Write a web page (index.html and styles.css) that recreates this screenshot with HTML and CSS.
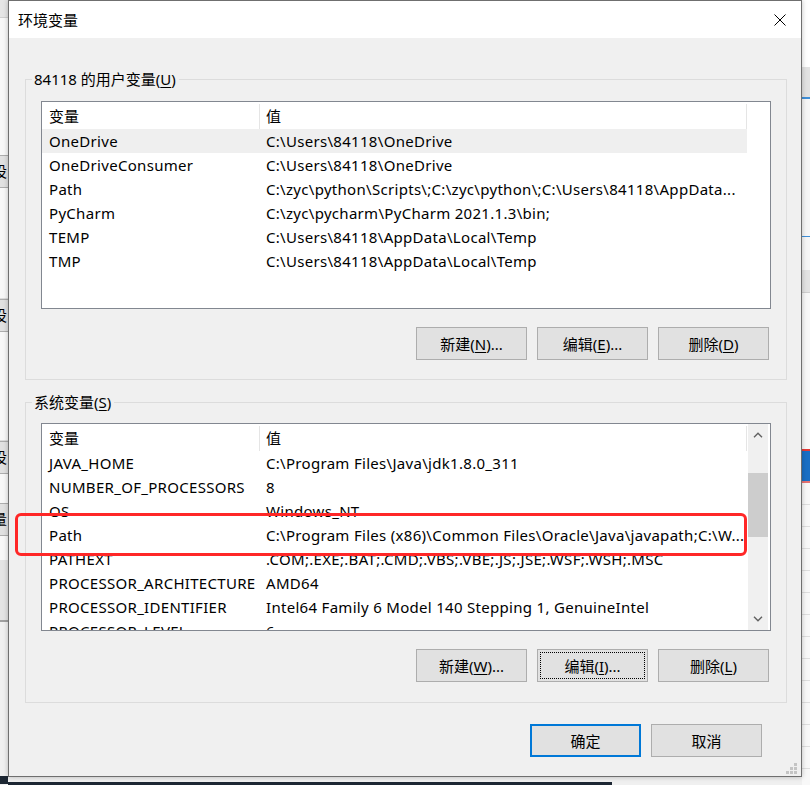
FILE: index.html
```html
<!DOCTYPE html>
<html lang="zh-CN">
<head>
<meta charset="utf-8">
<title>环境变量</title>
<link rel="stylesheet" href="styles.css">
</head>
<body>
<div class="desk-left">
  <div class="dl dl-top"></div>
  <div class="dl dl-white1"></div>
  <div class="dl dl-btn">设</div>
  <div class="dl dl-white2"></div>
  <div class="dl dl-btn">设</div>
  <div class="dl dl-white3"></div>
  <div class="dl dl-btn">设</div>
  <div class="dl dl-white4"></div>
  <div class="dl dl-btn">量</div>
  <div class="dl dl-white5"></div>
  <div class="dl dl-gray"></div>
  <div class="dl dl-rest"></div>
  <div class="dl dl-task"></div>
</div>

<div class="center">
<div class="dialog">
  <div class="titlebar">
    <span class="title">环境变量</span>
    <span class="close">
      <svg width="12" height="12" viewBox="0 0 12 12"><path d="M0.5 0.5 L11.5 11.5 M11.5 0.5 L0.5 11.5" stroke="#000" stroke-width="1" fill="none"/></svg>
    </span>
  </div>
  <div class="content">
    <div class="group group-user">
      <div class="group-title">84118 的用户变量(<u>U</u>)</div>
      <div class="list">
        <div class="table">
          <div class="head"><div class="hc hc1">变量</div><div class="hc hc2">值</div></div>
          <div class="row row-sel"><div class="c1">OneDrive</div><div class="c2">C:\Users\84118\OneDrive</div></div>
          <div class="row"><div class="c1">OneDriveConsumer</div><div class="c2">C:\Users\84118\OneDrive</div></div>
          <div class="row"><div class="c1">Path</div><div class="c2">C:\zyc\python\Scripts\;C:\zyc\python\;C:\Users\84118\AppData...</div></div>
          <div class="row"><div class="c1">PyCharm</div><div class="c2">C:\zyc\pycharm\PyCharm 2021.1.3\bin;</div></div>
          <div class="row"><div class="c1">TEMP</div><div class="c2">C:\Users\84118\AppData\Local\Temp</div></div>
          <div class="row"><div class="c1">TMP</div><div class="c2">C:\Users\84118\AppData\Local\Temp</div></div>
        </div>
      </div>
      <div class="buttons">
        <button class="btn">新建(<u>N</u>)...</button>
        <button class="btn">编辑(<u>E</u>)...</button>
        <button class="btn">删除(<u>D</u>)</button>
      </div>
    </div>

    <div class="group group-sys">
      <div class="group-title">系统变量(<u>S</u>)</div>
      <div class="list">
        <div class="table">
          <div class="head"><div class="hc hc1">变量</div><div class="hc hc2">值</div></div>
          <div class="row"><div class="c1">JAVA_HOME</div><div class="c2">C:\Program Files\Java\jdk1.8.0_311</div></div>
          <div class="row"><div class="c1">NUMBER_OF_PROCESSORS</div><div class="c2">8</div></div>
          <div class="row"><div class="c1">OS</div><div class="c2">Windows_NT</div></div>
          <div class="row"><div class="c1">Path</div><div class="c2">C:\Program Files (x86)\Common Files\Oracle\Java\javapath;C:\W...</div></div>
          <div class="row"><div class="c1">PATHEXT</div><div class="c2">.COM;.EXE;.BAT;.CMD;.VBS;.VBE;.JS;.JSE;.WSF;.WSH;.MSC</div></div>
          <div class="row"><div class="c1">PROCESSOR_ARCHITECTURE</div><div class="c2">AMD64</div></div>
          <div class="row"><div class="c1">PROCESSOR_IDENTIFIER</div><div class="c2">Intel64 Family 6 Model 140 Stepping 1, GenuineIntel</div></div>
          <div class="row"><div class="c1">PROCESSOR_LEVEL</div><div class="c2">6</div></div>
        </div>
        <div class="vscroll">
          <div class="sb-btn">
            <svg width="10" height="6" viewBox="0 0 10 6"><path d="M1 5.2 L5 1.2 L9 5.2" stroke="#606060" stroke-width="1.4" fill="none"/></svg>
          </div>
          <div class="sb-track"><div class="sb-thumb"></div></div>
          <div class="sb-btn">
            <svg width="10" height="6" viewBox="0 0 10 6"><path d="M1 0.8 L5 4.8 L9 0.8" stroke="#606060" stroke-width="1.4" fill="none"/></svg>
          </div>
        </div>
      </div>
      <div class="buttons">
        <button class="btn">新建(<u>W</u>)...</button>
        <button class="btn btn-focus"><span class="focus-ring">编辑(<u>I</u>)...</span></button>
        <button class="btn">删除(<u>L</u>)</button>
      </div>
    </div>

    <div class="footer">
      <button class="btn btn-default">确定</button>
      <button class="btn">取消</button>
    </div>
  </div>
  <svg class="grip" width="12" height="12" viewBox="0 0 12 12">
    <rect x="8" y="0" width="3" height="3" fill="#c4c4c4"/>
    <rect x="4" y="4" width="3" height="3" fill="#c4c4c4"/>
    <rect x="8" y="4" width="3" height="3" fill="#c4c4c4"/>
    <rect x="0" y="8" width="3" height="3" fill="#c4c4c4"/>
    <rect x="4" y="8" width="3" height="3" fill="#c4c4c4"/>
    <rect x="8" y="8" width="3" height="3" fill="#c4c4c4"/>
  </svg>
</div>
<div class="below"><div class="taskbar"></div></div>
</div>

<div class="desk-right">
  <div class="dr dr-white"></div>
  <div class="dr dr-gray"></div>
  <div class="dr dr-blue"></div>
  <div class="dr dr-light"></div>
  <div class="dr dr-blue1"></div>
  <div class="dr dr-light2"></div>
  <div class="dr dr-gray2"></div>
  <div class="dr dr-light3"></div>
  <div class="dr dr-sel"></div>
  <div class="dr dr-lines"></div>
</div>

<div class="annot"></div>
</body>
</html>
```

FILE: styles.css
```css
html, body {
  margin: 0;
  padding: 0;
}
body {
  width: 810px;
  height: 785px;
  overflow: hidden;
  position: relative;
  display: flex;
  align-items: flex-start;
  background: #f0f0f0;
  font-family: "Noto Sans", "Noto Sans CJK SC", sans-serif;
  font-size: 15px;
  color: #000;
}

/* desktop strips */
.desk-left {
  width: 8px;
  height: 785px;
  flex: none;
  display: flex;
  flex-direction: column;
  overflow: hidden;
}
.dl { flex: none; width: 8px; overflow: hidden; }
.dl-top { height: 17px; background: #e6e6e6; border-bottom: 1px solid #d0d0d0; }
.dl-white1 { height: 137px; background: #f8f8f8; }
.dl-btn {
  height: 31px;
  background: #e1e1e1;
  border-top: 1px solid #adadad;
  border-bottom: 1px solid #adadad;
  font-size: 15px;
  line-height: 31px;
  text-indent: -8px;
  white-space: nowrap;
}
.dl-white2 { height: 110px; background: #f8f8f8; border-bottom: 1px solid #dcdcdc; }
.dl-white3 { height: 108px; background: #f8f8f8; border-bottom: 1px solid #dcdcdc; }
.dl-white4 { height: 29px; background: #f8f8f8; }
.dl-white5 { height: 24px; background: #f8f8f8; }
.dl-gray { height: 60px; background: #e4e4e4; border-bottom: 2px solid #a0a0a0; }
.dl-rest { height: 154px; background: #f0f0f0; }
.dl-task { height: 8px; background: #1d2733; }

.center {
  width: 794px;
  flex: none;
  display: flex;
  flex-direction: column;
}
.below {
  height: 8px;
  display: flex;
  flex-direction: column;
  justify-content: flex-end;
}
.taskbar {
  width: 604px;
  height: 3px;
  background: #1d2733;
}

.desk-right {
  width: 8px;
  height: 785px;
  flex: none;
  display: flex;
  flex-direction: column;
  overflow: hidden;
  background: #f5f5f5;
}
.dr { flex: none; }
.dr-white { height: 67px; background: #ffffff; }
.dr-gray { height: 30px; background: #e2e2e2; }
.dr-blue { height: 2px; background: #3f8fd8; }
.dr-light { height: 137px; background: #f6f6f6; }
.dr-blue1 { height: 1px; background: #3f8fd8; }
.dr-light2 { height: 33px; background: #f6f6f6; }
.dr-gray2 { height: 22px; background: #e3e3e3; border-bottom: 1px solid #cfcfcf; }
.dr-light3 { height: 156px; background: #f8f8f8; border-bottom: 2px solid #e53935; }
.dr-sel { height: 30px; background: #1a6fc4; border-bottom: 2px solid #e57373; }
.dr-lines {
  height: 305px;
  background: repeating-linear-gradient(to bottom, #f8f8f8 0, #f8f8f8 21px, #dedede 21px, #dedede 22px);
}

/* dialog */
.dialog {
  width: 794px;
  height: 777px;
  flex: none;
  box-sizing: border-box;
  border: 1px solid #6f6f6f;
  background: #f0f0f0;
  display: flex;
  flex-direction: column;
  position: relative;
  box-shadow: 0 0 5px rgba(0, 0, 0, 0.25);
  z-index: 1;
}
.titlebar {
  height: 37px;
  flex: none;
  background: #fff;
  display: flex;
  align-items: center;
  justify-content: space-between;
  padding-left: 9px;
}
.title {
  font-size: 15px;
  line-height: 20px;
}
.close {
  width: 42px;
  height: 37px;
  display: flex;
  align-items: center;
  justify-content: center;
}
.close svg { display: block; }

.content {
  flex: 1;
  padding: 41px 14px 0 16px;
  display: flex;
  flex-direction: column;
}

.group {
  position: relative;
  border: 1px solid #dcdcdc;
  padding: 21px 15px 19px;
}
.group-sys {
  margin-top: 22px;
  padding: 20px 15px 20px;
}
.group-title {
  position: absolute;
  top: -11px;
  left: 6px;
  padding: 0 3px 0 2px;
  background: #f0f0f0;
  line-height: 20px;
  white-space: nowrap;
}
.group-title u, .btn u { text-underline-offset: 2px; }

.list {
  height: 208px;
  box-sizing: border-box;
  border: 1px solid #828790;
  background: #fff;
  display: flex;
  overflow: hidden;
}
.table {
  width: 705px;
  flex: none;
  overflow: hidden;
}
.head {
  height: 27px;
  display: flex;
  align-items: center;
}
.hc {
  height: 25px;
  margin-top: 1px;
  line-height: 25px;
  box-sizing: border-box;
  border-right: 1px solid #e5e5e5;
  white-space: nowrap;
}
.hc1 { width: 218px; padding-left: 7px; }
.hc2 { width: 487px; padding-left: 6px; }

.row {
  height: 24px;
  line-height: 24px;
  display: flex;
  white-space: nowrap;
  letter-spacing: 0.3px;
}
.row-sel { background: #efefef; }
.c1 {
  width: 218px;
  flex: none;
  box-sizing: border-box;
  padding-left: 7px;
  overflow: hidden;
}
.c2 {
  width: 487px;
  flex: none;
  box-sizing: border-box;
  padding-left: 6px;
  overflow: hidden;
}

.vscroll {
  width: 20px;
  flex: none;
  margin-left: 1px;
  background: #f0f0f0;
  display: flex;
  flex-direction: column;
}
.sb-btn {
  height: 22px;
  flex: none;
  display: flex;
  align-items: center;
  justify-content: center;
}
.sb-btn svg { display: block; }
.sb-track { flex: 1; }
.sb-thumb {
  margin-top: 27px;
  height: 64px;
  background: #cdcdcd;
}

.buttons {
  margin-top: 18px;
  display: flex;
  justify-content: flex-end;
  gap: 10px;
  padding-right: 2px;
}
.btn {
  width: 111px;
  height: 33px;
  box-sizing: border-box;
  border: 1px solid #adadad;
  background: #e1e1e1;
  font-family: inherit;
  font-size: 15px;
  color: #000;
  padding: 0;
  margin: 0;
  display: flex;
  align-items: center;
  justify-content: center;
}
.btn-focus { padding: 2px; }
.focus-ring {
  flex: 1;
  align-self: stretch;
  display: flex;
  align-items: center;
  justify-content: center;
  border: 1px dotted #000;
}
.btn-default {
  border: 2px solid #0078d7;
}

.footer {
  margin-top: 21px;
  display: flex;
  justify-content: flex-end;
  gap: 10px;
  padding-right: 25px;
}

.grip {
  position: absolute;
  right: 3px;
  bottom: 1px;
}

/* red annotation frame drawn over the screenshot */
.annot {
  position: absolute;
  left: 15px;
  top: 513px;
  width: 732px;
  height: 43px;
  box-sizing: border-box;
  border: 3px solid #ff2727;
  border-radius: 6px;
  z-index: 5;
  pointer-events: none;
}
```
